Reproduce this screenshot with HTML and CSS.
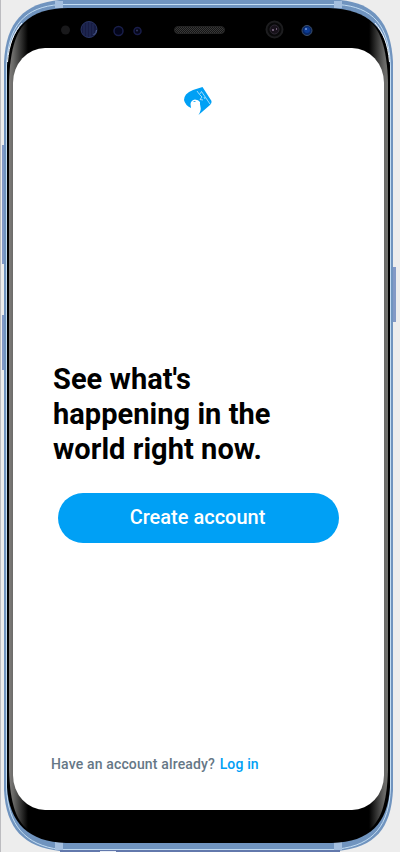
FILE: index.html
```
<!DOCTYPE html>
<html lang="en">
<head>
<meta charset="utf-8">
<meta name="viewport" content="width=device-width, initial-scale=1">
<title>Create account</title>
<link rel="stylesheet" href="styles.css">
</head>
<body>
<div class="device">
  <svg class="frame" viewBox="0 0 400 852" aria-hidden="true">
    <defs>
      <linearGradient id="edge" gradientUnits="userSpaceOnUse" x1="9" y1="0" x2="388" y2="0">
        <stop offset="0" stop-color="#807e7c"/><stop offset=".012" stop-color="#686866"/><stop offset=".05" stop-color="#000"/>
        <stop offset=".95" stop-color="#000"/><stop offset=".99" stop-color="#686866"/><stop offset="1" stop-color="#72726e"/>
      </linearGradient>
      <pattern id="mesh" width="2" height="2" patternUnits="userSpaceOnUse">
        <rect width="2" height="2" fill="#151515"/><path d="M0 0h1v1h-1zM1 1h1v1h-1z" fill="#383838"/>
      </pattern>
    </defs>
    <path d="M.5 0V852" stroke="#bcbcc0"/>
    <path d="M2 145h3v119h-3zM2 315h3v55h-3z" fill="#8299c6"/>
    <path d="M393 267h3v55h-3z" fill="#8299c6"/>
    <path d="M4 62C6 22 24 3 60 0H340C374 3 391 22 393 62V790C391 829 375 847 338 851H60C24 847 6 829 4 790Z" fill="#7094bf"/>
    <path d="M6.500 66C8 25 25 7 60 4.500H338C373 7 389 25 390.500 66V788C389 825 374 845 338 849" fill="none" stroke="#c2dcf2"/>
    <path d="M6.500 66V788C8 825 25 845 60 849.500H338" fill="none" stroke="#c2dcf2"/>
    <path d="M60 851H340" stroke="#6278ac" stroke-width="2"/>
    <path d="M55 1h8v7h-8zM334 1h8v7h-8zM55 842h8v8h-8zM334 842h8v8h-8z" fill="#a4bfdf"/>
    <path d="M100 851h16v1h-16z" fill="#e8eef6"/>
    <path d="M7 66C9 27 30 8 68 8H329C368 9 388 28 390 66V787C388 823 370 842 332 843H66C29 842 9 823 7 787Z" fill="#000"/>
    <path d="M7.500 62C9 44 14 32 22 23M389.500 62C388 44 383 32 375 23" fill="none" stroke="#f1f6fb"/>
    <path d="M9 82C10 48 17 27 30 20V831C17 823 10 805 9 770Z" fill="url(#edge)"/>
    <path d="M388 82C387 48 380 27 367 20V831C380 823 387 805 388 770Z" fill="url(#edge)"/>
    <circle cx="65.500" cy="30" r="4.500" fill="#19191b"/>
    <circle cx="89" cy="29.500" r="8" fill="#171c43" stroke="#293564"/>
    <path d="M84 24v11M87 22v15M90 22v15M93 24v11" stroke="#252e5a"/>
    <path d="M93.500 35q3-2 3-5" fill="none" stroke="#526393"/>
    <circle cx="118.500" cy="31" r="4.500" fill="#03051a" stroke="#191e4a" stroke-width="1.500"/>
    <circle cx="137.500" cy="31" r="3.500" fill="#050719" stroke="#191d4a" stroke-width="1.500"/>
    <circle cx="137" cy="30.500" r="1" fill="#34395f"/>
    <rect x="174.500" y="26.500" width="50" height="7" rx="3.500" fill="url(#mesh)" stroke="#242424"/>
    <circle cx="274.500" cy="29.500" r="8" fill="#09090a" stroke="#1d1d1f" stroke-width="2"/>
    <circle cx="274.500" cy="29.500" r="4.500" fill="#18121b" stroke="#2d2832"/>
    <path d="M272 29h2v2h-2zM276 28h1v2h-1z" fill="#6c5b72"/>
    <circle cx="307" cy="30.500" r="5" fill="#082765" stroke="#3c4e69"/>
    <circle cx="307" cy="30" r="3" fill="#0c3b93"/><path d="M305 28h2v2h-2z" fill="#5c80c8"/>
  </svg>
  <main class="screen">
    <svg class="logo" viewBox="0 0 30 30" aria-label="Logo">
      <path d="M3 8.500Q5 6 10 4L19.500 1L28.500 15Q29 17 27 19L15.500 29Q18.500 24 17.500 21Q16.700 18 17 16Q15.500 13.500 12 13.500Q8 14 7.500 18L8 22Q2 19 1 14Q1 11 3 8.500Z" fill="#00a0f5"/>
      <path d="M14 5l2.500 3.500 2-3M18.500 5.500L27 18M17 9l2 2-2 2.500 3 .5M21 11l1 2" fill="none" stroke="#fff" stroke-width=".6"/>
      <path d="M10.500 15.500h2" stroke="#00a0f5" stroke-width=".8"/>
    </svg>
    <section class="welcome">
      <h1>See what's<br>happening in the<br>world right now.</h1>
      <button class="create">Create account</button>
    </section>
    <p class="login">Have an account already? <a href="#">Log in</a></p>
  </main>
</div>
</body>
</html>
```
FILE: styles.css
```
* { box-sizing: border-box; }
body { margin: 0; background: #ededed; font-family: Roboto, "Liberation Sans", sans-serif; }
.device { position: relative; width: 400px; height: 852px; padding: 48px 16px 42px 13px; overflow: hidden; }
.frame { position: absolute; inset: 0; width: 400px; height: 852px; }
.screen { position: relative; display: flex; flex-direction: column; width: 371px; height: 762px; padding: 38px 40px 37px 38px; border-radius: 32px / 35px; background: #fff; }
.logo { width: 30px; height: 30px; margin-left: 132px; flex: none; }
.welcome { margin-top: 246px; padding-left: 2px; }
h1 { margin: 0; color: #000; font-size: 29px; line-height: 35px; font-weight: 700; letter-spacing: .04px; white-space: nowrap; }
.create { display: block; width: 281px; height: 50px; margin: 26px 0 0 5px; padding: 0 2px 2px 0; border: 0; border-radius: 25px; background: #00a0f5; color: #fff; font: 500 20px Roboto, sans-serif; }
.login { margin: auto 0 0; color: #657786; font-size: 14px; line-height: 18px; font-weight: 500; letter-spacing: .15px; white-space: nowrap; }
.login a { margin-left: 1px; color: #00a0f5; text-decoration: none; }
```
